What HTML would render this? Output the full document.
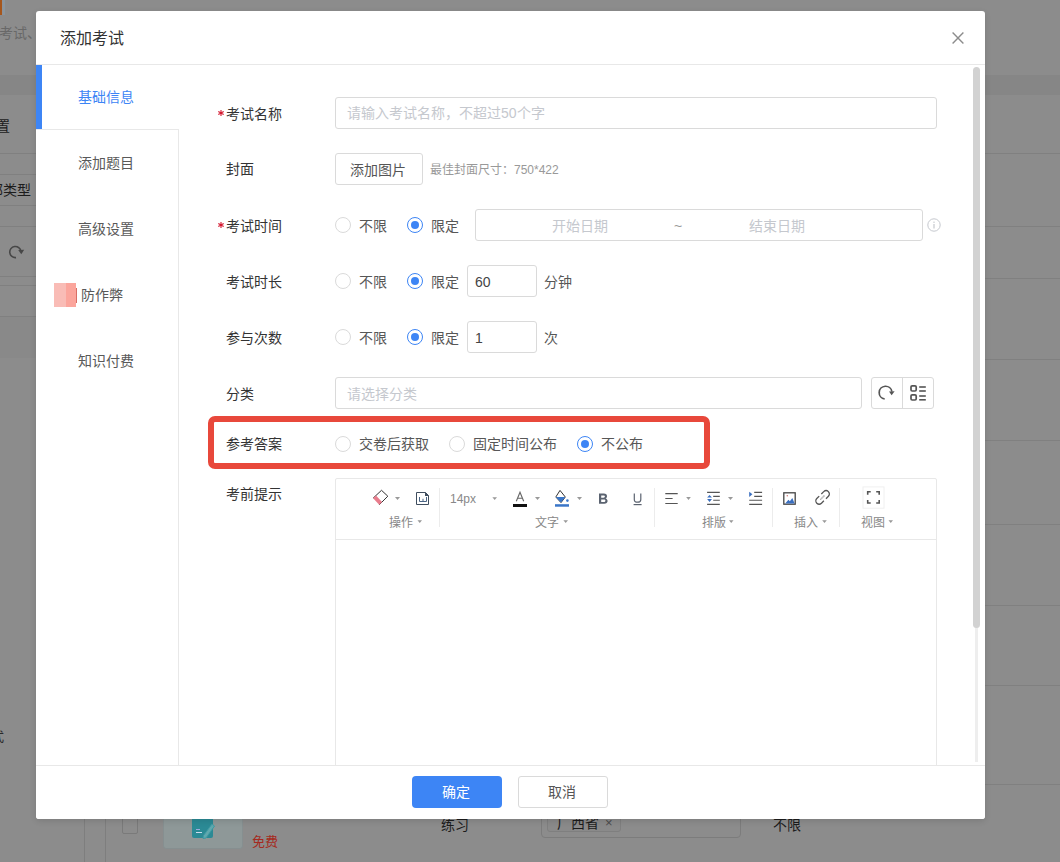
<!DOCTYPE html>
<html lang="zh-CN"><head><meta charset="utf-8">
<style>
*{margin:0;padding:0;box-sizing:border-box;}
html,body{width:1060px;height:862px;overflow:hidden;background:#fff;font-family:"Liberation Sans",sans-serif;}
.a{position:absolute;}
#page{position:absolute;left:0;top:0;width:1060px;height:862px;background:#8c8c8c;}
#mask{position:absolute;left:0;top:0;width:1060px;height:862px;background:rgba(0,0,0,0.45);}
#modal{position:absolute;left:36px;top:11px;width:949px;height:808px;background:#fff;border-radius:3px;box-shadow:0 2px 6px rgba(0,0,0,.12);}
.hl{position:absolute;height:1px;background:#e8e8e8;}
.vl{position:absolute;width:1px;background:#e8e8e8;}
.lbl{position:absolute;font-size:14px;color:#333;line-height:20px;white-space:nowrap;}
.req{position:absolute;font-size:14px;color:#ed4014;line-height:20px;}
.inp{position:absolute;border:1px solid #dadada;border-radius:3px;background:#fff;}
.ph{position:absolute;font-size:14px;color:#c5c8ce;line-height:20px;white-space:nowrap;}
.rad{position:absolute;width:16px;height:16px;border:1px solid #dadada;border-radius:50%;background:#fff;}
.rad.on{border-color:#3d85f5;}
.rad.on::after{content:"";position:absolute;left:3px;top:3px;width:8px;height:8px;border-radius:50%;background:#3d85f5;}
.rt{position:absolute;font-size:14px;color:#575757;line-height:20px;white-space:nowrap;}
.tab{position:absolute;font-size:14px;color:#595959;line-height:20px;white-space:nowrap;}
.tb{position:absolute;font-size:12px;color:#888;line-height:16px;white-space:nowrap;}
.caret{position:absolute;width:0;height:0;border-left:3px solid transparent;border-right:3px solid transparent;border-top:3px solid #999;}
.sep{position:absolute;width:1px;height:38px;background:#eee;top:488px;}
</style></head>
<body>
<div id="page">
  <div class="a" style="left:0;top:0;width:2px;height:15px;background:#a5561c"></div>
  <div class="a" style="left:2px;top:0;width:1px;height:15px;background:#8e939a"></div>
  <div class="a" style="left:3px;top:0;width:2px;height:15px;background:#8a96a0"></div>
  <div class="a" style="left:-1px;top:24px;font-size:14px;color:#686868;line-height:18px;white-space:nowrap">考试、</div>
  <div class="a" style="left:0;top:75px;width:1060px;height:20px;background:#868686"></div>
  <div class="a" style="left:-4px;top:116px;font-size:14px;color:#1c1c1c;line-height:20px;white-space:nowrap">置</div>
  <div class="a" style="left:0;top:153px;width:1060px;height:1px;background:#808080"></div>
  <div class="a" style="left:0;top:174px;width:40px;height:1px;background:#808080"></div>
  <div class="a" style="left:-11px;top:180px;font-size:14px;color:#1c1c1c;line-height:20px;white-space:nowrap">部类型</div>
  <div class="a" style="left:0;top:205px;width:40px;height:1px;background:#808080"></div>
  <div class="a" style="left:0;top:226px;width:1060px;height:1px;background:#808080"></div>
  <svg class="a" style="left:4px;top:240px" width="24" height="24" viewBox="0 0 24 24"><path d="M12 17.6A5.6 5.6 0 1 1 16.9 11.2" stroke="#474747" stroke-width="1.6" fill="none"/><path d="M14.2 10.0L20.2 9.8L17.3 14.2Z" fill="#474747"/></svg>
  <div class="a" style="left:0;top:276px;width:40px;height:1px;background:#808080"></div>
  <div class="a" style="left:980px;top:278px;width:80px;height:1px;background:#808080"></div>
  <div class="a" style="left:0;top:285px;width:40px;height:1px;background:#808080"></div>
  <div class="a" style="left:0;top:316px;width:40px;height:1px;background:#808080"></div>
  <div class="a" style="left:0;top:317px;width:40px;height:41px;background:#898989"></div>
  <div class="a" style="left:980px;top:359px;width:80px;height:1px;background:#808080"></div>
  <div class="a" style="left:980px;top:440px;width:80px;height:1px;background:#808080"></div>
  <div class="a" style="left:980px;top:524px;width:80px;height:1px;background:#808080"></div>
  <div class="a" style="left:980px;top:605px;width:80px;height:1px;background:#808080"></div>
  <div class="a" style="left:980px;top:685px;width:80px;height:1px;background:#808080"></div>
  <div class="a" style="left:980px;top:784px;width:80px;height:1px;background:#808080"></div>
  <div class="a" style="left:-9px;top:727px;font-size:13px;color:#2a2a2a;line-height:20px">式</div>
  <div class="a" style="left:84px;top:800px;width:1px;height:62px;background:#7e7e7e"></div>
  <div class="a" style="left:105px;top:800px;width:1px;height:62px;background:#7e7e7e"></div>
  <div class="a" style="left:122px;top:812px;width:16px;height:22px;border:1px solid #7a7a7a;border-radius:2px;background:#8c8c8c"></div>
  <div class="a" style="left:163px;top:800px;width:80px;height:49px;background:#8e9898;border:1px solid #868f90;border-radius:3px"></div>
  <div class="a" style="left:192px;top:810px;width:21px;height:28px;background:#2b8a95;border-radius:2px"></div>
  <div class="a" style="left:196px;top:829px;width:4px;height:1px;background:#9ad"></div>
  <div class="a" style="left:196px;top:832px;width:6px;height:1px;background:#cde"></div>
  <svg class="a" style="left:200px;top:822px" width="16" height="18" viewBox="0 0 16 18"><path d="M12 2L14.5 4L6 16L3 16.5L3.5 13.5Z" fill="#5fa8ae" stroke="#3d9aa3" stroke-width="1"/></svg>
  <div class="a" style="left:252px;top:833px;font-size:13px;color:#a52a20;line-height:18px">免费</div>
  <div class="a" style="left:441px;top:815px;font-size:14px;color:#1c1c1c;line-height:20px">练习</div>
  <div class="a" style="left:541px;top:800px;width:200px;height:38px;border:1px solid #7c7c7c;border-radius:4px;background:#8c8c8c"></div>
  <div class="a" style="left:547px;top:806px;width:74px;height:26px;border:1px solid #7f7f7f;border-radius:3px;background:#8a8a8a"></div>
  <div class="a" style="left:557px;top:813px;font-size:14px;color:#1c1c1c;line-height:20px">广西省</div>
  <div class="a" style="left:605px;top:813px;font-size:13px;color:#4a4a4a;line-height:20px">×</div>
  <div class="a" style="left:773px;top:815px;font-size:14px;color:#1c1c1c;line-height:20px">不限</div>
</div>
<div id="modal"></div>

<!-- modal header -->
<div class="a" style="left:60px;top:29px;font-size:16px;color:#333;line-height:20px;white-space:nowrap">添加考试</div>
<svg class="a" style="left:952px;top:32px" width="12" height="12" viewBox="0 0 12 12"><path d="M0.6 0.6L11.4 11.4M11.4 0.6L0.6 11.4" stroke="#8c8c8c" stroke-width="1.4" fill="none"/></svg>
<div class="hl" style="left:36px;top:64px;width:949px;"></div>

<!-- sidebar -->
<div class="a" style="left:36px;top:65px;width:6px;height:64px;background:#3d85f5"></div>
<div class="hl" style="left:36px;top:129px;width:142px;"></div>
<div class="vl" style="left:178px;top:129px;height:636px;"></div>
<div class="tab" style="left:78px;top:87px;color:#3d85f5">基础信息</div>
<div class="tab" style="left:78px;top:153px;">添加题目</div>
<div class="tab" style="left:78px;top:219px;">高级设置</div>
<div class="a" style="left:54px;top:283px;width:22px;height:24px;background:#f9bcb6"></div>
<div class="a" style="left:66px;top:283px;width:10px;height:24px;background:#fba59c"></div>
<div class="a" style="left:76px;top:288px;width:1px;height:15px;background:#d86e66"></div>
<div class="tab" style="left:81px;top:285px;">防作弊</div>
<div class="tab" style="left:78px;top:351px;">知识付费</div>

<!-- scrollbar -->
<div class="a" style="left:975px;top:620px;width:3px;height:142px;background:#eee"></div>
<div class="a" style="left:973px;top:67px;width:7px;height:561px;background:#d2d2d2;border-radius:4px"></div>

<!-- row1 考试名称 -->
<svg class="a" style="left:216.5px;top:109px" width="8" height="8" viewBox="0 0 8 8"><path d="M4 0.9V7.1M1.3 2.45L6.7 5.55M6.7 2.45L1.3 5.55" stroke="#d4182f" stroke-width="1.1" fill="none"/></svg>
<div class="lbl" style="left:226px;top:104px;">考试名称</div>
<div class="inp" style="left:335px;top:97px;width:602px;height:32px;"></div>
<div class="ph" style="left:347px;top:103px;">请输入考试名称，不超过50个字</div>

<!-- row2 封面 -->
<div class="lbl" style="left:226px;top:159px;">封面</div>
<div class="inp" style="left:335px;top:153px;width:88px;height:32px;"></div>
<div class="lbl" style="left:350px;top:160px;color:#555">添加图片</div>
<div class="a" style="left:430px;top:162px;font-size:12px;color:#999;line-height:16px;white-space:nowrap">最佳封面尺寸：750*422</div>

<!-- row3 考试时间 -->
<svg class="a" style="left:216.5px;top:221px" width="8" height="8" viewBox="0 0 8 8"><path d="M4 0.9V7.1M1.3 2.45L6.7 5.55M6.7 2.45L1.3 5.55" stroke="#d4182f" stroke-width="1.1" fill="none"/></svg>
<div class="lbl" style="left:226px;top:216px;">考试时间</div>
<div class="rad" style="left:335px;top:217px;"></div>
<div class="rt" style="left:359px;top:216px;">不限</div>
<div class="rad on" style="left:407px;top:217px;"></div>
<div class="rt" style="left:431px;top:216px;">限定</div>
<div class="inp" style="left:475px;top:209px;width:448px;height:32px;"></div>
<div class="ph" style="left:552px;top:216px;">开始日期</div>
<div class="ph" style="left:674px;top:216px;color:#999">~</div>
<div class="ph" style="left:749px;top:216px;">结束日期</div>
<svg class="a" style="left:927px;top:218px" width="14" height="14" viewBox="0 0 14 14"><circle cx="7" cy="7" r="6.2" stroke="#c5c8ce" stroke-width="1" fill="none"/><rect x="6.4" y="6" width="1.2" height="4.5" fill="#c5c8ce"/><rect x="6.4" y="3.6" width="1.2" height="1.3" fill="#c5c8ce"/></svg>

<!-- row4 考试时长 -->
<div class="lbl" style="left:226px;top:272px;">考试时长</div>
<div class="rad" style="left:335px;top:273px;"></div>
<div class="rt" style="left:359px;top:272px;">不限</div>
<div class="rad on" style="left:407px;top:273px;"></div>
<div class="rt" style="left:431px;top:272px;">限定</div>
<div class="inp" style="left:467px;top:265px;width:70px;height:32px;"></div>
<div class="lbl" style="left:475px;top:272px;color:#444">60</div>
<div class="rt" style="left:544px;top:272px;">分钟</div>

<!-- row5 参与次数 -->
<div class="lbl" style="left:226px;top:328px;">参与次数</div>
<div class="rad" style="left:335px;top:329px;"></div>
<div class="rt" style="left:359px;top:328px;">不限</div>
<div class="rad on" style="left:407px;top:329px;"></div>
<div class="rt" style="left:431px;top:328px;">限定</div>
<div class="inp" style="left:467px;top:321px;width:70px;height:32px;"></div>
<div class="lbl" style="left:475px;top:328px;color:#444">1</div>
<div class="rt" style="left:544px;top:328px;">次</div>

<!-- row6 分类 -->
<div class="lbl" style="left:226px;top:384px;">分类</div>
<div class="inp" style="left:335px;top:377px;width:527px;height:32px;"></div>
<div class="ph" style="left:347px;top:384px;">请选择分类</div>
<div class="inp" style="left:871px;top:377px;width:63px;height:32px;"></div>
<div class="vl" style="left:902px;top:378px;height:30px;background:#dadada"></div>
<svg class="a" style="left:871px;top:377px" width="32" height="32" viewBox="0 0 32 32"><path d="M13.7 22A6.4 6.4 0 1 1 20.9 14.6" stroke="#555" stroke-width="1.7" fill="none"/><path d="M18.0 14.4L23.6 14.2L20.6 18.2Z" fill="#555"/></svg>
<svg class="a" style="left:903px;top:377px" width="32" height="32" viewBox="0 0 32 32"><rect x="8" y="8.8" width="5.2" height="5.2" rx="1.2" stroke="#555" stroke-width="1.7" fill="none"/><rect x="8" y="17.8" width="5.2" height="5.2" rx="1.2" stroke="#555" stroke-width="1.7" fill="none"/><rect x="16.2" y="9.2" width="6.6" height="1.6" fill="#555"/><rect x="16.2" y="13.2" width="6.6" height="1.6" fill="#555"/><rect x="16.2" y="18.2" width="6.6" height="1.6" fill="#555"/><rect x="16.2" y="22" width="6.6" height="1.6" fill="#555"/></svg>

<!-- row7 参考答案 (highlighted) -->
<div class="a" style="left:208px;top:416px;width:502px;height:53px;border:6px solid #e8483b;border-radius:7px"></div>
<div class="lbl" style="left:226px;top:434px;">参考答案</div>
<div class="rad" style="left:335px;top:436px;"></div>
<div class="rt" style="left:359px;top:434px;">交卷后获取</div>
<div class="rad" style="left:449px;top:436px;"></div>
<div class="rt" style="left:473px;top:434px;">固定时间公布</div>
<div class="rad on" style="left:577px;top:436px;"></div>
<div class="rt" style="left:601px;top:434px;">不公布</div>

<!-- row8 考前提示 editor -->
<div class="lbl" style="left:226px;top:484px;">考前提示</div>
<div class="a" style="left:335px;top:478px;width:602px;height:300px;border:1px solid #e8e8e8;border-radius:2px"></div>
<div class="hl" style="left:336px;top:539px;width:600px;"></div>
<svg class="a" style="left:0;top:0" width="1060" height="862" viewBox="0 0 1060 862"><path d="M373.1 498.2L381.5 490.3L387.8 496.2L379.2 504.8" stroke="#333" stroke-width="1" fill="none" stroke-linejoin="miter"/><path d="M373.1 498.2L379.2 504.8L382.1 502.1L376.0 495.5Z" fill="#e97c8c"/><path d="M395 497H400L397.50 500Z" fill="#999"/><path d="M416.5 492.5H425.5L428.5 495.5V504.5H416.5Z" stroke="#3f4d5e" stroke-width="1" fill="none"/><path d="M425 492L429 496H425Z" fill="#3f4d5e"/><path d="M419.5 497V501.5H426.5V497M423 498.8V501.5" stroke="#4a6484" stroke-width="1" fill="none"/><rect x="439.0" y="488" width="1" height="39" fill="#ececec"/><rect x="654.0" y="488" width="1" height="39" fill="#ececec"/><rect x="772.0" y="488" width="1" height="39" fill="#ececec"/><rect x="839.0" y="488" width="1" height="39" fill="#ececec"/><path d="M492.4 497.2H497L494.70 500Z" fill="#999"/><path d="M516.3 501.2L520 492.2L523.7 501.2M517.6 498.2H522.4" stroke="#666" stroke-width="1.1" fill="none"/><rect x="513" y="504" width="14" height="3" fill="#111"/><path d="M535 497H540L537.50 500Z" fill="#999"/><path d="M560 490.4L565.3 497L561 502.6L555.8 497Z" stroke="#333" stroke-width="1" fill="none"/><path d="M555.8 497H565.3L561 502.6Z" fill="#3a76c8"/><circle cx="567.4" cy="500.6" r="1.3" fill="#3a76c8"/><rect x="555" y="504.2" width="14" height="2.5" fill="#3a76c8"/><path d="M577 497H582L579.50 500Z" fill="#999"/><path fill-rule="evenodd" fill="#5b6370" d="M599 493.6H603.8C606 493.6 607 494.8 607 496.2C607 497.4 606.3 498.2 605.5 498.5C606.8 498.8 607.6 499.8 607.6 501.1C607.6 502.7 606.4 503.8 604.2 503.8H599ZM601.2 495.4V497.8H603.5C604.4 497.8 604.9 497.3 604.9 496.6C604.9 495.9 604.4 495.4 603.5 495.4ZM601.2 499.5V502H603.8C604.8 502 605.4 501.5 605.4 500.75C605.4 500 604.8 499.5 603.8 499.5Z"/><path d="M634.3 493.6V499.4C634.3 501.2 635.5 502.2 637.6 502.2C639.6 502.2 640.8 501.2 640.8 499.4V493.6" stroke="#5b6370" stroke-width="1.2" fill="none"/><rect x="633.6" y="504" width="8" height="1.2" fill="#5b6370"/><path d="M665.3 493.6H677.7M665.3 498.5H672.6M665.3 503.5H677.7" stroke="#555" stroke-width="1.1" fill="none"/><path d="M686.2 497H690.8L688.50 500Z" fill="#999"/><path d="M707.1 492.4H719.8M713.2 496.4H719.8M713.2 500.3H719.8M707.1 504.4H719.8" stroke="#555" stroke-width="1.1" fill="none"/><path d="M707.1 497.6H712L709.55 495Z M707.1 499H712L709.55 501.9Z" fill="#3a6fc0"/><path d="M728 497H733L730.50 500Z" fill="#999"/><path d="M754.2 492.4H762.1M754.2 496.4H762.1M749.2 500.3H762.1M749.2 504.4H762.1" stroke="#555" stroke-width="1.1" fill="none"/><path d="M749.2 491.8V496.9L752.4 494.35Z" fill="#3a6fc0"/><rect x="783.8" y="492.8" width="11.4" height="11.4" stroke="#444" stroke-width="1.3" fill="none"/><path d="M785.2 503.6L788.4 499.8L789.9 501.2L792.3 497.9L794.6 503.6Z" fill="#3a6fc0"/><circle cx="787.3" cy="495.8" r="0.8" fill="#c77"/><g transform="translate(822.6 497.4) rotate(-45)"><path d="M1.5 -3.3H4.9A3.3 3.3 0 0 1 4.9 3.3H1.5M-1.5 3.3H-4.9A3.3 3.3 0 0 1 -4.9 -3.3H-1.5" stroke="#555" stroke-width="1.3" fill="none"/><path d="M-3 0H3" stroke="#555" stroke-width="1" stroke-dasharray="0.9 0.6" fill="none"/></g><rect x="863" y="486.9" width="21" height="21.3" stroke="#f0f0f0" stroke-width="1" fill="none"/><path d="M867.7 494.7V491.7H870.7M876.2 491.7H879.2V494.7M879.2 500V503H876.2M870.7 503H867.7V500" stroke="#555" stroke-width="1.6" fill="none"/><path d="M417.5 520.3H422L419.75 523Z" fill="#999"/><path d="M563.4 520.2H568L565.70 523Z" fill="#999"/><path d="M729 520.2H733.5L731.25 523Z" fill="#999"/><path d="M822.2 520.2H826.8L824.50 523Z" fill="#999"/><path d="M888.5 520.2H893L890.75 523Z" fill="#999"/></svg>
<div class="tb" style="left:389px;top:515px;">操作</div>
<div class="a" style="left:450px;top:491px;font-size:12px;color:#888;line-height:16px;">14px</div>
<div class="tb" style="left:535px;top:515px;">文字</div>
<div class="tb" style="left:702px;top:515px;">排版</div>
<div class="tb" style="left:794px;top:515px;">插入</div>
<div class="tb" style="left:861px;top:515px;">视图</div>

<!-- footer -->
<div class="hl" style="left:36px;top:765px;width:949px;"></div>
<div class="a" style="left:36px;top:766px;width:949px;height:53px;background:#fff;border-radius:0 0 3px 3px"></div>
<div class="a" style="left:412px;top:776px;width:90px;height:32px;background:#3d85f5;border-radius:4px"></div>
<div class="a" style="left:442px;top:782px;font-size:14px;color:#fff;line-height:20px;font-weight:500">确定</div>
<div class="inp" style="left:518px;top:776px;width:90px;height:32px;"></div>
<div class="a" style="left:548px;top:782px;font-size:14px;color:#555;line-height:20px">取消</div>

</body></html>
